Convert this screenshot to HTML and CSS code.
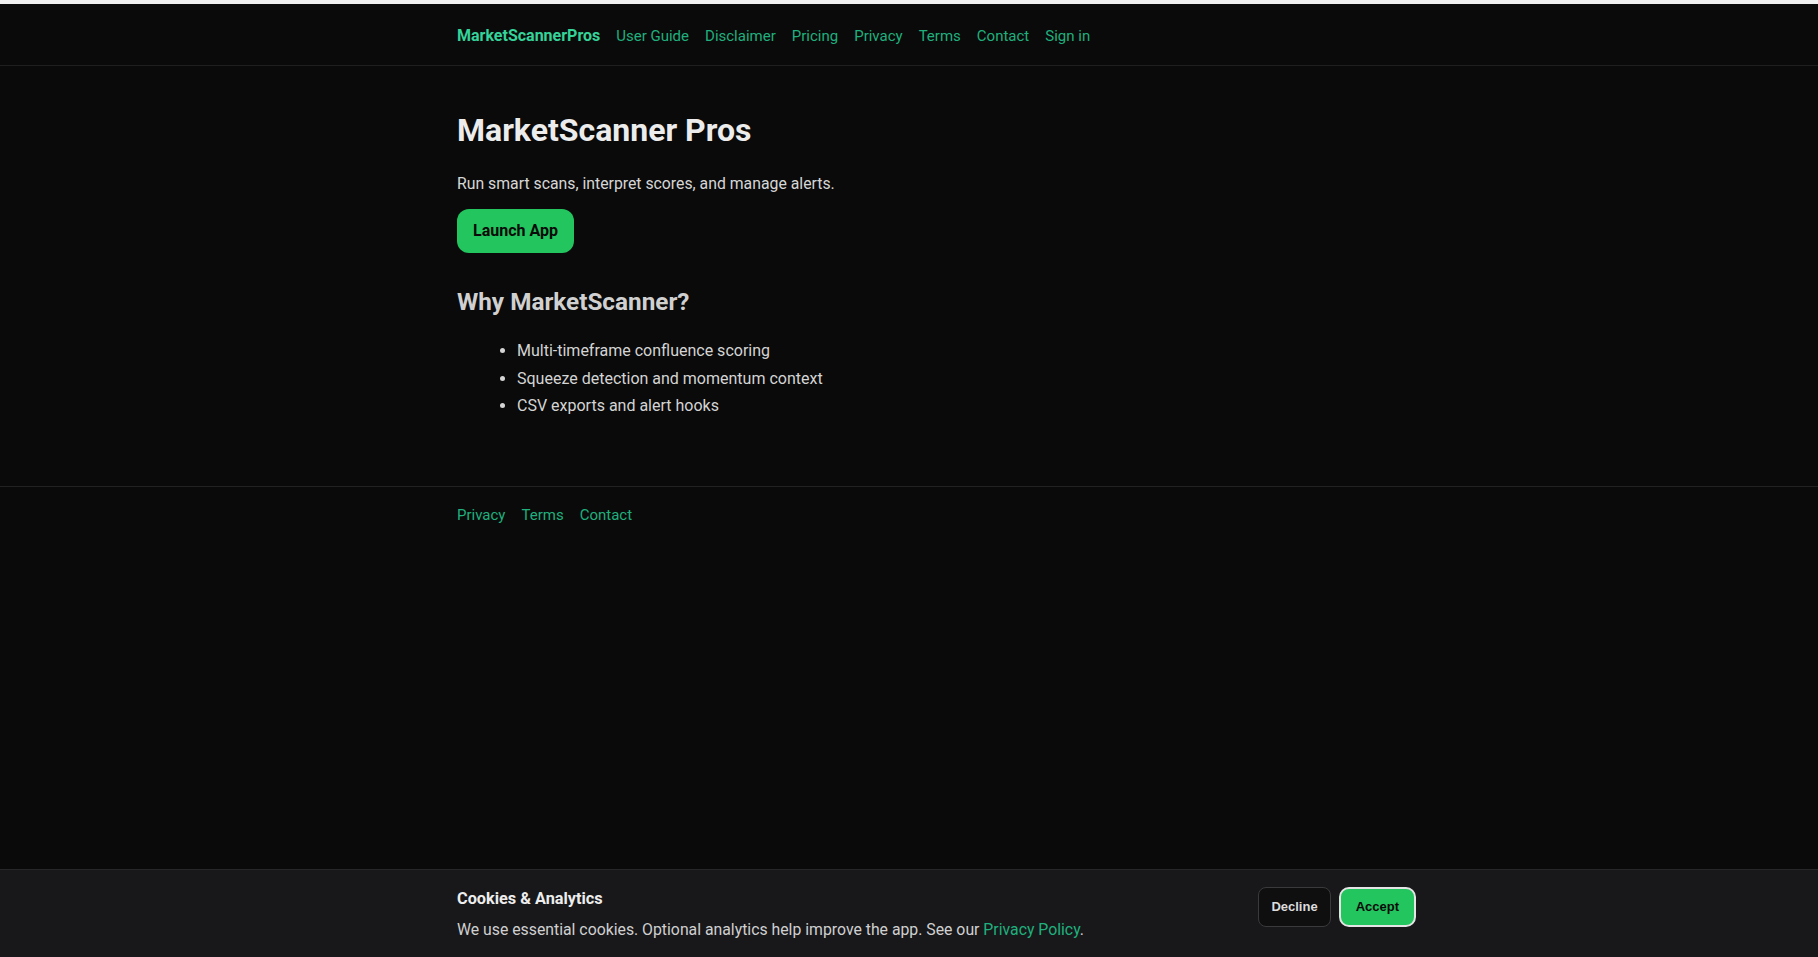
FILE: index.html
```
<!DOCTYPE html>
<html lang="en">
<head>
<meta charset="utf-8">
<title>MarketScanner Pros</title>
<link rel="stylesheet" href="styles.css">
</head>
<body>
<div class="top-strip"></div>
<header class="site-header">
  <nav class="container nav">
    <a class="brand" href="#">MarketScannerPros</a>
    <a class="nav-link" href="#">User Guide</a>
    <a class="nav-link" href="#">Disclaimer</a>
    <a class="nav-link" href="#">Pricing</a>
    <a class="nav-link" href="#">Privacy</a>
    <a class="nav-link" href="#">Terms</a>
    <a class="nav-link" href="#">Contact</a>
    <a class="nav-link" href="#">Sign in</a>
  </nav>
</header>
<main class="container main">
  <h1 class="title">MarketScanner Pros</h1>
  <p class="lead">Run smart scans, interpret scores, and manage alerts.</p>
  <a class="btn-launch" href="#">Launch App</a>
  <h2 class="subtitle">Why MarketScanner?</h2>
  <ul class="features">
    <li>Multi-timeframe confluence scoring</li>
    <li>Squeeze detection and momentum context</li>
    <li>CSV exports and alert hooks</li>
  </ul>
</main>
<footer class="site-footer">
  <div class="container footer-links">
    <a href="#">Privacy</a>
    <a href="#">Terms</a>
    <a href="#">Contact</a>
  </div>
</footer>
<div class="cookie">
  <div class="cookie-inner">
    <div class="cookie-text">
      <div class="cookie-title">Cookies &amp; Analytics</div>
      <div class="cookie-desc">We use essential cookies. Optional analytics help improve the app. See our <a href="#">Privacy Policy</a>.</div>
    </div>
    <div class="cookie-actions">
      <button class="btn-decline" type="button">Decline</button>
      <button class="btn-accept" type="button">Accept</button>
    </div>
  </div>
</div>
</body>
</html>
```
FILE: styles.css
```
* { box-sizing: border-box; }
html, body { margin: 0; padding: 0; }
body {
  background: #0a0a0a;
  color: #d4d4d4;
  font-family: Roboto, "Noto Sans", sans-serif;
  font-size: 16px;
  height: 100vh;
  overflow: hidden;
}
a { text-decoration: none; }
.top-strip { height: 4px; background: #f0f0f0; }
.container { max-width: 904px; margin: 0 auto; }
.site-header { border-bottom: 1px solid #1f1f1f; }
.nav {
  display: flex;
  align-items: baseline;
  gap: 16px;
  padding: 21px 0 18px;
  line-height: 21px;
}
.brand { color: #34d399; font-weight: 700; font-size: 16px; }
.nav-link { color: #1fb07d; font-size: 15px; }
.main {
  display: flex;
  flex-direction: column;
  align-items: flex-start;
  padding: 45px 0 66px;
}
.title {
  margin: 0;
  font-size: 32px;
  line-height: 38px;
  font-weight: 700;
  color: #ececec;
}
.lead { margin: 23px 0 13px; line-height: 24px; color: #d6d6d6; font-size: 15.8px; }
.btn-launch {
  background: #22c55e;
  color: #0a0a0a;
  font-weight: 700;
  line-height: 21px;
  padding: 11px 16px 12px;
  border-radius: 12px;
}
.subtitle {
  margin: 34px 0 0;
  font-size: 24.3px;
  line-height: 30px;
  font-weight: 700;
  color: #d0d0d0;
}
.features {
  margin: 20px 0 0;
  padding-left: 60px;
  line-height: 27.5px;
  color: #d4d4d4;
}
.site-footer { border-top: 1px solid #222; }
.footer-links {
  display: flex;
  gap: 16px;
  padding-top: 16px;
  line-height: 24px;
  font-size: 15px;
}
.footer-links a { color: #1fb07d; }
.cookie {
  position: fixed;
  left: 0; right: 0; bottom: 0;
  background: #18181b;
  border-top: 1px solid #27272a;
}
.cookie-inner {
  display: flex;
  justify-content: space-between;
  align-items: flex-start;
  width: 959px;
  margin-left: calc(50% - 452px);
  padding: 18px 0 17px;
  font-size: 15.8px;
  line-height: 21px;
}
.cookie-title { font-weight: 700; color: #ededed; margin-bottom: 10px; font-size: 16.3px; }
.cookie-desc { color: #d0d0d0; }
.cookie-desc a { color: #1fb07d; }
.cookie-actions { display: flex; gap: 8px; margin-top: -1px; }
.cookie-actions button {
  font-family: "Liberation Sans", Arial, sans-serif;
  font-weight: 700;
  font-size: 13px;
  line-height: 14px;
  cursor: pointer;
}
.btn-decline {
  background: #0f0f10;
  color: #dcdcdc;
  border: 1px solid #3a3a3c;
  border-radius: 8px;
  padding: 12px 12px;
}
.btn-accept {
  background: #22c55e;
  color: #0a0a0a;
  border: 2px solid #e4e4e4;
  border-radius: 10px;
  padding: 11px 15px;
}
```
